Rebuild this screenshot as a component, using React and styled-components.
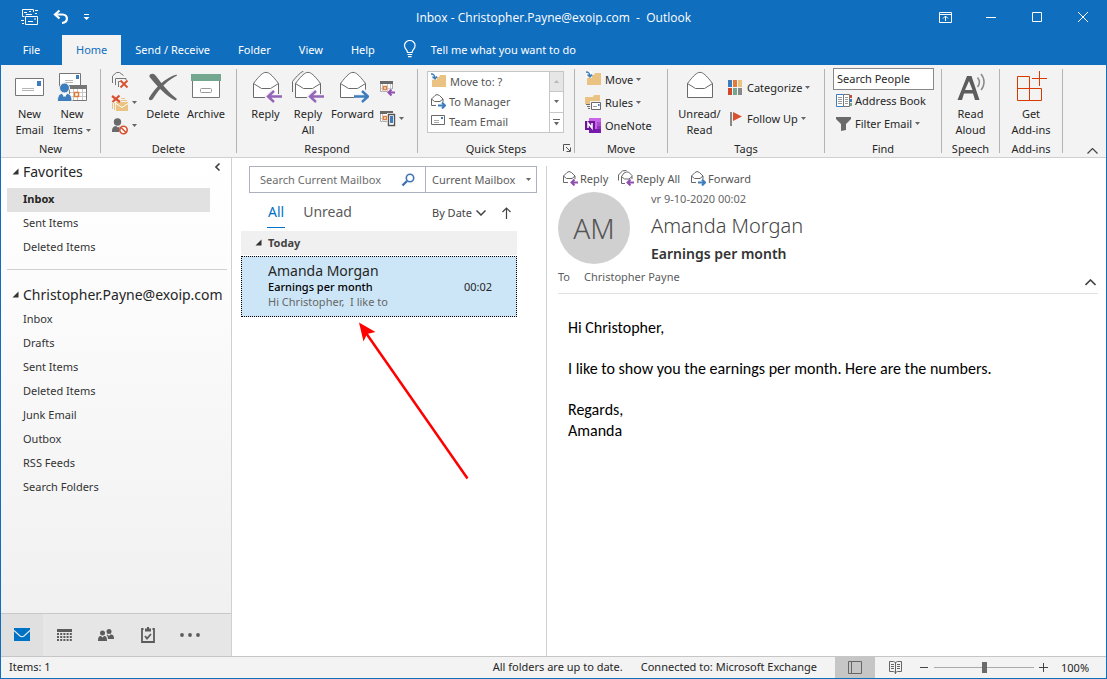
import React from "react";
import styled, { createGlobalStyle, css } from "styled-components";

const blue = "#106ebe";
const accent = "#0072c6";
const line = "#d0d0d0";
const ink = "#262626";
const grey = "#666";

const GlobalStyle = createGlobalStyle`
  * { box-sizing: border-box; }
  body {
    margin: 0;
    font-family: "Noto Sans", "Open Sans", sans-serif;
    font-size: 11px;
    color: ${ink};
  }
  button, input, select {
    font: inherit;
    color: inherit;
    margin: 0;
    padding: 0;
    border: 0;
    background: none;
    border-radius: 0;
  }
  svg { display: block; flex: none; }
  h2, p { margin: 0; }
`;

const Window = styled.div`
  display: flex;
  flex-direction: column;
  min-height: 100vh;
  border: 1px solid ${blue};
  background: #fff;
`;

/* ---------- title bar and tabs ---------- */

const TitleBar = styled.header`
  display: grid;
  grid-template-columns: 1fr auto 1fr;
  align-items: center;
  height: 34px;
  padding-bottom: 2px;
  background: ${blue};
  color: #fff;
`;

const QuickAccess = styled.div`
  display: flex;
  align-items: center;
  gap: 14px;
  padding-left: 20px;
`;

const Title = styled.div`
  font-size: 12px;
  font-family: "Open Sans", sans-serif;
  white-space: pre;
`;

const WindowControls = styled.div`
  display: flex;
  justify-content: flex-end;
`;

const WindowButton = styled.button`
  display: flex;
  align-items: center;
  justify-content: center;
  width: 46px;
  height: 30px;
`;

const TabBar = styled.nav`
  display: flex;
  height: 30px;
  background: ${blue};
`;

const Tab = styled.button`
  display: flex;
  align-items: center;
  gap: 14px;
  min-width: ${(p) => (p.$file ? "61px" : "0")};
  justify-content: center;
  padding: 0 14px 2px;
  color: ${(p) => (p.$active ? blue : "#fff")};
  background: ${(p) => (p.$active ? "#f3f3f3" : "transparent")};
`;

/* ---------- ribbon ---------- */

const RibbonBar = styled.section`
  display: flex;
  height: 93px;
  padding-top: 4px;
  background: #f3f3f3;
  border-bottom: 1px solid ${line};
`;

const Group = styled.div`
  display: flex;
  flex-direction: column;
  flex: none;
  width: ${(p) => p.$width}px;
`;

const GroupBody = styled.div`
  display: flex;
  flex: 1;
  padding-left: ${(p) => p.$pad || 0}px;
  justify-content: ${(p) => (p.$center ? "center" : "flex-start")};
`;

const GroupLabel = styled.div`
  display: grid;
  grid-template-columns: 1fr auto 1fr;
  align-items: center;
  height: 17px;
  padding-bottom: 1px;
  line-height: 15px;
  svg { grid-column: 3; justify-self: end; margin-right: 3px; }
  span { grid-column: 2; }
`;

const Divider = styled.div`
  flex: none;
  width: 1px;
  height: 84px;
  background: #b4b4b4;
`;

const BigButton = styled.button`
  display: flex;
  flex-direction: column;
  align-items: center;
  width: ${(p) => p.$width}px;
  height: 71px;
  padding-top: 2px;
  line-height: 16px;
  white-space: nowrap;
`;

const BigLabel = styled.span`
  display: flex;
  align-items: center;
  gap: 3px;
  &:first-of-type { margin-top: 3px; }
`;

const SmallColumn = styled.div`
  display: flex;
  flex-direction: column;
  width: ${(p) => (p.$width ? p.$width + "px" : "auto")};
  padding-left: ${(p) => p.$pad || 0}px;
  padding-top: ${(p) => p.$top || 0}px;
`;

const SmallButton = styled.button`
  display: flex;
  align-items: center;
  gap: 3px;
  height: ${(p) => p.$height || 23}px;
  padding-bottom: 2px;
  white-space: nowrap;
`;

const StepsBox = styled.div`
  display: flex;
  width: 137px;
  height: 62px;
  margin: 2px 0 0 9px;
  background: #fff;
  border: 1px solid #c6c6c6;
`;

const Steps = styled.div`
  flex: 1;
  padding-left: 2px;
  color: #555;
`;

const StepsScroll = styled.div`
  display: flex;
  flex-direction: column;
  width: 14px;
  border-left: 1px solid #c6c6c6;
`;

const StepsArrow = styled.button`
  display: flex;
  flex: 1;
  align-items: center;
  justify-content: center;
  color: ${(p) => (p.$off ? "#b8b8b8" : grey)};
  background: ${(p) => (p.$off ? "#e6e6e6" : "#fff")};
  & + & { border-top: 1px solid #c6c6c6; }
`;

const PeopleInput = styled.input`
  width: 101px;
  height: 22px;
  padding: 0 3px 2px;
  border: 1px solid #888;
  background: #fff;
  &::placeholder { color: ${ink}; opacity: 1; }
`;

const FindColumn = styled.div`
  display: flex;
  flex-direction: column;
  margin: -1px 0 0 8px;
  ${SmallButton} { margin-left: 3px; }
`;

const Collapse = styled.button`
  align-self: flex-end;
  margin: 0 8px 3px auto;
`;

/* ---------- folder pane ---------- */

const Main = styled.main`
  display: flex;
  flex: 1;
`;

const FolderPane = styled.aside`
  display: flex;
  flex-direction: column;
  flex: none;
  width: 231px;
  border-right: 1px solid ${line};
  background: linear-gradient(#fff, #fcfcfc 25%, #efefef);
`;

const FolderTree = styled.div`
  flex: 1;
  padding: 1px 4px 0 6px;
`;

const FolderHeading = styled.h2`
  display: flex;
  align-items: center;
  gap: 4px;
  height: 24px;
  margin-bottom: ${(p) => (p.$first ? 5 : 2)}px;
  padding-left: 5px;
  font-size: 14px;
  font-weight: 400;
`;

const PaneCollapse = styled.button`
  margin: -8px 6px 0 auto;
`;

const Folder = styled.a`
  display: block;
  height: 24px;
  margin-right: 17px;
  padding-left: 16px;
  line-height: 22px;
  color: #333;
  text-decoration: none;
  ${(p) =>
    p.$selected &&
    css`
      font-weight: 700;
      color: ${ink};
      background: #e1e1e1;
    `}
`;

const Rule = styled.hr`
  height: 1px;
  margin: 9px 0 12px;
  border: 0;
  background: ${line};
`;

const Switcher = styled.nav`
  display: flex;
  height: 43px;
  border-top: 1px solid #c8c8c8;
  background: #e6e6e6;
`;

const SwitchButton = styled.button`
  display: flex;
  align-items: center;
  justify-content: center;
  width: 42px;
  color: ${(p) => (p.$active ? accent : "#5c5c5c")};
  background: ${(p) => (p.$active ? "#e0e0e0" : "transparent")};
`;

/* ---------- message list ---------- */

const ListPane = styled.section`
  position: relative;
  flex: none;
  width: 315px;
  margin-top: 8px;
  border-right: 1px solid ${line};
`;

const SearchRow = styled.div`
  display: flex;
  height: 27px;
  margin: 0 9px 0 17px;
  border: 1px solid #abb2bb;
  color: #5c5c5c;
`;

const SearchField = styled.label`
  display: flex;
  flex: 1;
  min-width: 0;
  align-items: center;
  padding: 0 10px;
  input { flex: 1; min-width: 0; outline: 0; }
  input::placeholder { color: #6c6c6c; opacity: 1; }
`;

const ScopeField = styled.label`
  display: flex;
  flex: none;
  align-items: center;
  width: 111px;
  padding: 0 5px 0 6px;
  border-left: 1px solid #abb2bb;
  select { flex: 1; min-width: 0; appearance: none; outline: 0; }
`;

const FilterRow = styled.div`
  display: flex;
  height: 38px;
  padding: 4px 35px 0 35px;
`;

const Filter = styled.button`
  height: 31px;
  margin-right: 17px;
  padding: 0 1px 2px;
  font-size: 14px;
  color: ${(p) => (p.$active ? accent : "#5c5c5c")};
  border-bottom: 1px solid ${(p) => (p.$active ? accent : "transparent")};
`;

const Sort = styled.div`
  display: flex;
  align-items: center;
  gap: 16px;
  height: 31px;
  margin-left: auto;
  color: #444;
  button { display: flex; align-items: center; gap: 4px; }
`;

const DateHeader = styled.h2`
  display: flex;
  align-items: center;
  gap: 6px;
  height: 24px;
  margin: 0 29px 1px 9px;
  padding: 0 0 2px 14px;
  font-size: 11px;
  font-weight: 700;
  color: #444;
  background: #f0f0f0;
`;

const Message = styled.article`
  display: grid;
  grid-template-columns: 1fr auto;
  margin: 0 29px 0 9px;
  padding: 5px 24px 7px 26px;
  border: 1px dotted #000;
  background: #cde6f7;
  line-height: 15px;
`;

const Sender = styled.div`
  grid-column: 1 / 3;
  font-size: 14px;
  line-height: 17px;
`;

const Subject = styled.div`
  font-weight: 500;
  color: #000;
`;

const Preview = styled.div`
  color: ${grey};
  white-space: pre;
`;

const Pointer = styled.svg`
  position: absolute;
  left: 120px;
  top: 150px;
  pointer-events: none;
`;

/* ---------- reading pane ---------- */

const ReadingPane = styled.section`
  flex: 1;
  padding: 10px 8px 0 11px;
`;

const ReadingActions = styled.div`
  display: flex;
  gap: 10px;
  padding-left: 4px;
  color: #555;
  button { display: flex; align-items: center; gap: 2px; height: 20px; }
`;

const MailHead = styled.div`
  display: flex;
  gap: 21px;
`;

const Avatar = styled.div`
  display: flex;
  align-items: center;
  justify-content: center;
  width: 72px;
  height: 72px;
  margin-top: 4px;
  border-radius: 50%;
  background: #d0d0d0;
  color: #555;
  font-size: 28px;
  font-weight: 300;
`;

const MailDate = styled.div`
  margin-top: 2px;
  color: ${grey};
  line-height: 17px;
`;

const MailSender = styled.div`
  font-size: 20px;
  font-weight: 300;
  line-height: 37px;
  color: #444;
`;

const MailSubject = styled.h2`
  font-size: 14px;
  font-weight: 600;
  line-height: 20px;
  color: #333;
`;

const Recipients = styled.div`
  display: flex;
  gap: 14px;
  height: 30px;
  padding-top: 5px;
  border-bottom: 1px solid #e1e1e1;
  line-height: 16px;
  color: #5c5c5c;
  button { margin: 10px 2px 0 auto; align-self: flex-start; }
`;

const MailBody = styled.div`
  padding: 23px 10px;
  font-family: Carlito, Calibri, Lato, sans-serif;
  font-size: 16px;
  line-height: 21px;
  color: #000;
  p { margin-bottom: 20px; }
`;

/* ---------- status bar ---------- */

const StatusBar = styled.footer`
  display: flex;
  align-items: stretch;
  height: 22px;
  padding: 0 16px 0 8px;
  line-height: 20px;
  background: #f3f3f3;
  border-top: 1px solid #c6c6c6;
`;

const StatusRight = styled.div`
  display: flex;
  margin-left: auto;
  span { margin-right: 18px; }
`;

const ViewButton = styled.button`
  display: flex;
  align-items: center;
  justify-content: center;
  width: 40px;
  background: ${(p) => (p.$active ? "#c6c6c6" : "transparent")};
`;

const Zoom = styled.div`
  display: flex;
  align-items: center;
  gap: 5px;
  margin-left: 5px;
  output { width: 29px; margin-left: 8px; }
`;

const ZoomSlider = styled.input`
  appearance: none;
  width: 100px;
  height: 12px;
  &::-webkit-slider-runnable-track {
    height: 11px;
    background: linear-gradient(#ababab, #ababab) center / 100% 1px no-repeat;
  }
  &::-webkit-slider-thumb {
    appearance: none;
    width: 5px;
    height: 11px;
    background: #6a6a6a;
  }
`;

/* ---------- icons ---------- */

const Caret = ({ color = "#666" }) => (
  <svg width="5" height="3" viewBox="0 0 5 3" fill={color}>
    <path d="M0 0h5L2.500 3z" />
  </svg>
);

const Corner = () => (
  <svg width="7" height="7" viewBox="0 0 7 7" fill="#333">
    <path d="M6.500 0.500v6h-6z" />
  </svg>
);

const Chevron = ({ d, w = 10, h = 6, width = 1.2 }) => (
  <svg width={w} height={h} viewBox={`0 0 ${w} ${h}`} fill="none" stroke="#444" strokeWidth={width}>
    <path d={d} />
  </svg>
);

const SendReceiveIcon = () => (
  <svg width="18" height="18" viewBox="0 0 18 18" fill="none" stroke="#fff">
    <path d="M12.500 4V1.500H1.500v7h2M3 4.500h3M8 3.500h2M14 2.500h3M14 5.500h2M0 12.500h3M1 15.500h2" />
    <path d="M4.500 8.500h12v8h-12zM7 13.500h5M13 11h2M5 7V6.500h6" />
  </svg>
);

const UndoIcon = () => (
  <svg width="16" height="16" viewBox="0 0 16 16" fill="none" stroke="#fff" strokeWidth="2.200">
    <path d="M6.500 1.500L2 5.500l4.500 4" />
    <path d="M2.500 5.500H9.500c6 0 6 8-0.500 8.500" />
  </svg>
);

const CustomizeIcon = () => (
  <svg width="7" height="7" viewBox="0 0 7 7" fill="#fff">
    <path d="M1 0h5v1H1zM0.500 3h6L3.500 6z" />
  </svg>
);

const BulbIcon = () => (
  <svg width="14" height="18" viewBox="0 0 14 18" fill="none" stroke="#fff" strokeWidth="1.200">
    <path d="M4.500 12.500c0-3-3-3.500-3-7a5.300 5 0 0 1 10.600 0c0 3.500-3 4-3 7zM4.500 14.500h4.600M5 16.700h3.600" />
  </svg>
);

const NewEmailIcon = () => (
  <svg width="32" height="32" viewBox="0 0 32 32">
    <path d="M1.500 7.500h28v17h-28z" fill="#fff" stroke="#767676" />
    <path d="M8 17.500h12M8 19.500h12" stroke="#b4b4b4" />
    <path d="M23 10h4v5h-4z" fill="#3e7dbd" />
  </svg>
);

const NewItemsIcon = () => (
  <svg width="32" height="32" viewBox="0 0 32 32">
    <path d="M3.500 2.500h21v15h-21z" fill="#fff" stroke="#767676" />
    <path d="M9 9.500h8M9 11.500h8" stroke="#b4b4b4" />
    <path d="M20 4h3v4h-3z" fill="#3e7dbd" />
    <path d="M13.500 14.500h17v15h-17z" fill="#fff" stroke="#767676" />
    <path d="M13 14h18v4H13z" fill="#767676" />
    <path d="M17.500 18v11M21.500 18v11M26.500 18v11M14 21.500h16M14 25.500h16" stroke="#c8c8c8" />
    <path d="M18.500 21.500h4v4h-4z" fill="#fff" stroke="#e07b39" strokeWidth="1.500" />
    <circle cx="8.500" cy="17" r="5" fill="#3e7dbd" stroke="#f3f3f3" />
    <path d="M1.500 30.500c0-5 1-7 4-8l3 2 3-2c3.500 1 4.500 3 4.500 8z" fill="#3e7dbd" stroke="#f3f3f3" />
    <path d="M7.500 22.500h2l0.500 3h-3z" fill="#fff" />
  </svg>
);

const DeleteIcon = () => (
  <svg width="32" height="32" viewBox="0 0 32 32" fill="#666">
    <path d="M3 3.500C5.500 2 7 2.500 9 5c7 9 12 16 21 23l-1.500 1.500C20 26 9 14 3 6.500c-.800-1-.800-2 0-3z" />
    <path d="M30 4.500c-8 4-17 12-23.500 22.500-1.500 3-5 3-4.500 0C8 17 18 7 29.500 3.500z" />
  </svg>
);

const ArchiveIcon = () => (
  <svg width="32" height="32" viewBox="0 0 32 32">
    <path d="M2.500 9.500h27v17h-27z" fill="#fff" stroke="#767676" />
    <path d="M1 3h30v7H1z" fill="#73a790" />
    <rect x="10.500" y="17.500" width="11" height="4" rx="1" fill="#fff" stroke="#999" />
  </svg>
);

const OpenEnvelope = () => (
  <>
    <path d="M3.500 26.500V12.500c3-4 7-9 10-10.500 1-.800 4-.800 5 0 3 1.500 7 6.500 10 10.500v14z" fill="#fff" stroke="#6a6a6a" />
    <path d="M3.500 12.500l8 5h9l8-5" fill="none" stroke="#6a6a6a" />
  </>
);

const EnvelopeIcon = ({ kind, all }) => (
  <svg width="32" height="32" viewBox="0 0 32 32">
    {all && (
      <path d="M0.500 21V10.500c3-4 7-8.500 11-10.500" fill="none" stroke="#6a6a6a" />
    )}
    <OpenEnvelope />
    {kind === "reply" && (
      <>
        <path d="M18 25.500h14M23.500 19.500l-6 6 6 6" fill="none" stroke="#f3f3f3" strokeWidth="5" />
        <path d="M18 25.500h14M24 20l-6 5.500 6 5.500" fill="none" stroke="#9466b8" strokeWidth="2.400" />
      </>
    )}
    {kind === "forward" && (
      <>
        <path d="M17 25.500h14M26 19.500l5 6-5 6" fill="none" stroke="#f3f3f3" strokeWidth="5" />
        <path d="M17 25.500h14M25 20l6 5.500-6 5.500" fill="none" stroke="#3e7dbd" strokeWidth="2.400" />
      </>
    )}
  </svg>
);

const SmallEnvelope = ({ kind, all }) => (
  <svg width="16" height="16" viewBox="0 0 16 16" fill="none" stroke="#666">
    {all && <path d="M0.500 10.500V5l4-4.200 4-.3" />}
    <path d={all ? "M7 13.500H3.500V6.500L6 3l2.500-1h2L14 5.500V9" : "M6 12.500H1.500V6L5 2.500 7 1.500 9.500 2.500 13 6v3"} />
    <path d={all ? "M3.500 6.500l3 2.500h4.500l3-2.500" : "M1.500 6l3 2.500h5.500l3-2.500"} />
    {kind === "reply" ? (
      <path d="M9.500 12.500H16M12.500 9.500l-3 3 3 3" stroke="#9050b0" strokeWidth="2" />
    ) : (
      <path d="M8 12.500h6.500M12 9.500l3 3-3 3" stroke="#3e7dbd" strokeWidth="2" />
    )}
  </svg>
);

const IgnoreIcon = () => (
  <svg width="18" height="18" viewBox="0 0 18 18" fill="none" stroke="#777">
    <path d="M1.500 12V5l4-3.500h3l4 3M4.500 14V7.500H15V9M7.500 16V10.500H10" />
    <path d="M9.500 9.500l7 7M16.500 9.500l-7 7" stroke="#d9512f" strokeWidth="1.800" />
  </svg>
);

const CleanUpIcon = () => (
  <svg width="18" height="18" viewBox="0 0 18 18">
    <path d="M10 4.500h4M10 6.500h6M1.500 9v6M3.500 9v7" stroke="#eac282" />
    <path d="M5 8h12v9H5z" fill="#eac282" />
    <path d="M5 9.500l6 4 6-4" fill="none" stroke="#fff" />
    <path d="M1 2l8 6M8.500 1.500L1.500 8" stroke="#d9512f" strokeWidth="2.200" />
  </svg>
);

const JunkIcon = () => (
  <svg width="18" height="18" viewBox="0 0 18 18">
    <circle cx="6.500" cy="5" r="3.700" fill="#6a6a6a" />
    <path d="M1 15c0-4 1-5.500 4-6l2 1.500 1.500-1L8 15z" fill="#6a6a6a" />
    <circle cx="12.500" cy="13" r="3.700" fill="#fff" stroke="#d9512f" strokeWidth="1.600" />
    <path d="M10 10.500l5 5" stroke="#d9512f" strokeWidth="1.600" />
  </svg>
);

const MeetingIcon = ({ phone }) => (
  <svg width="17" height="17" viewBox="0 0 17 17">
    <path d="M1.500 2.500h12v9h-12z" fill="#fff" stroke="#aaa" />
    <path d="M1 1h13v3H1z" fill="#6a6a6a" />
    <path d="M3.500 4v8M8.500 4v8M11.500 4v8M2 8.500h11" stroke="#ccc" />
    <path d="M4.500 6.500h3v3h-3z" fill="#fff" stroke="#e07b39" strokeWidth="1.400" />
    {phone ? (
      <>
        <path d="M8 3h9v14H8z" fill="#f3f3f3" />
        <path d="M9.500 4.500h6v11h-6z" fill="#fff" stroke="#555" strokeWidth="1.400" />
        <path d="M11 6h3v7h-3z" fill="#3e7dbd" />
      </>
    ) : (
      <>
        <path d="M9 9h8v8H9z" fill="#f3f3f3" />
        <path d="M9.500 12.500h6.500M12.500 9.500l-3 3 3 3" fill="none" stroke="#9050b0" strokeWidth="2" />
      </>
    )}
  </svg>
);

const MoveFolderIcon = () => (
  <svg width="17" height="17" viewBox="0 0 17 17">
    <path d="M2 4h7l1-2h6v12H2z" fill="#eac282" />
    <path d="M1 0h6v7H1z" fill="#fff" fillOpacity="0.7" />
    <path d="M1 1c3 0 4 1 4 5M2.500 3.500L5 6l2-2.500" fill="none" stroke="#3e7dbd" strokeWidth="1.500" />
  </svg>
);

const RulesIcon = () => (
  <svg width="17" height="17" viewBox="0 0 17 17">
    <path d="M0 3h8l1-2h6v9H0z" fill="#eac282" />
    <path d="M5 7h11v9H5z" fill="#f3f3f3" />
    <path d="M6.500 8.500h9v7h-9z" fill="#fff" stroke="#6a6a6a" />
    <path d="M1 10.500h4M2 12.500h3M3 14.500h2" stroke="#6a6a6a" />
    <path d="M8 12.500h4" stroke="#999" />
    <path d="M13 10h1.500v2H13z" fill="#3e7dbd" />
  </svg>
);

const OneNoteIcon = () => (
  <svg width="17" height="17" viewBox="0 0 17 17">
    <path d="M4 1h12v15H4z" fill="#ca64ea" />
    <path d="M12 5h4v4h-4z" fill="#ae4bd5" />
    <path d="M12 9h4v4h-4z" fill="#9332bf" />
    <path d="M4 12h12v4H4z" fill="#7719aa" />
    <path d="M0 4h10v9H0z" fill="#6b1699" />
    <path d="M3 11V6l4 5V6" fill="none" stroke="#fff" strokeWidth="1.500" />
  </svg>
);

const TeamEmailIcon = () => (
  <svg width="16" height="14" viewBox="0 0 16 14">
    <path d="M1.500 1.500h13v9h-13z" fill="#fff" stroke="#6a6a6a" />
    <path d="M4 6.500h5M4 8.500h5" stroke="#aaa" />
    <path d="M11 3h2v2h-2z" fill="#3e7dbd" />
  </svg>
);

const CategorizeIcon = () => (
  <svg width="16" height="16" viewBox="0 0 16 16">
    <path d="M0 0h4v7H0z" fill="#3e7dbd" />
    <path d="M5 0h4v7H5z" fill="#e07b39" />
    <path d="M10 0h4v7h-4z" fill="#eac282" />
    <path d="M0 8h4v7H0z" fill="#cf4b2c" />
    <path d="M5 8h4v7H5z" fill="#73a790" />
    <path d="M10 8h4v7h-4z" fill="#888" />
  </svg>
);

const FlagIcon = () => (
  <svg width="16" height="16" viewBox="0 0 16 16">
    <path d="M2 1h2v14H2z" fill="#888" />
    <path d="M5 1l9 4.500L5 10z" fill="#d9512f" />
  </svg>
);

const AddressBookIcon = () => (
  <svg width="16" height="16" viewBox="0 0 16 16">
    <path d="M0.500 1.500h7v12h-7z" fill="#fff" stroke="#3e7dbd" />
    <path d="M7.500 1.500h6v12h-6z" fill="#fff" stroke="#777" />
    <path d="M2 4.500h4M2 6.500h4M2 8.500h4M2 10.500h4M9 4.500h3M9 6.500h3M9 8.500h3M9 10.500h3" stroke="#999" />
    <path d="M14 2h2v3h-2z" fill="#cf4b2c" />
    <path d="M14 6h2v3h-2z" fill="#3e7dbd" />
    <path d="M14 10h2v3h-2z" fill="#73a790" />
  </svg>
);

const FilterIcon = () => (
  <svg width="16" height="16" viewBox="0 0 16 16" fill="#6a6a6a">
    <path d="M0 1h15v2L10 8v6l-5 1V8L0 3z" />
  </svg>
);

const ReadAloudIcon = () => (
  <svg width="32" height="32" viewBox="0 0 32 32">
    <path
      d="M12 5h4.500l8 24h-4.500l-2-6.500H9L7 29H2.500zM14 10l-4 9h7.500z"
      fill="#5c5c5c"
      fillRule="evenodd"
    />
    <path d="M22.500 6.500c2.500 3 2.500 6.500 0 9.500M26 3c4 4.500 4 11.500 0 16" fill="none" stroke="#8a8a8a" strokeWidth="1.500" />
  </svg>
);

const AddInsIcon = () => (
  <svg width="32" height="32" viewBox="0 0 32 32" fill="none" stroke="#d83b01">
    <path d="M2.500 5.500h12v12h-12zM2.500 17.500h12v12h-12zM14.500 17.500h12v12h-12zM24.500 0v15M17 7.500h15" />
  </svg>
);

const SearchIcon = () => (
  <svg width="14" height="14" viewBox="0 0 14 14" fill="none" stroke="#3e74b5">
    <circle cx="9" cy="5" r="3.700" strokeWidth="1.600" />
    <path d="M6 8L1.500 12.500" strokeWidth="2.400" />
  </svg>
);

const navIcons = {
  Mail: (
    <svg width="16" height="14" viewBox="0 0 16 14" fill={accent}>
      <path d="M0 0h16v13H0z" />
      <path d="M0 2.500L6 8c1.500 1 2.500 1 4 0l6-5.500" fill="none" stroke="#e8e8e8" strokeWidth="1.200" />
    </svg>
  ),
  Calendar: (
    <svg width="15" height="13" viewBox="0 0 15 13" stroke="currentColor">
      <path d="M0 1.500h15" strokeWidth="3" />
      <path d="M0 5h15M0 8h15M0 11h15" strokeWidth="2" strokeDasharray="2 1.200" />
    </svg>
  ),
  People: (
    <svg width="16" height="14" viewBox="0 0 16 14" fill="currentColor">
      <circle cx="4.500" cy="5" r="2.500" />
      <path d="M0 13c0-4 1-5 3-5l1.500 1.500L6 8c2 0 3 1 3 5z" />
      <circle cx="11" cy="3.500" r="2.500" />
      <path d="M8.500 7l1-.5L11 8l1.500-1.500c3 0 3.500 1.500 3.500 4.500h-6c0-2-.5-3-1.500-4z" />
    </svg>
  ),
  Tasks: (
    <svg width="14" height="16" viewBox="0 0 14 16" fill="none" stroke="currentColor" strokeWidth="1.800">
      <path d="M2.500 2H1v13h12V2h-1.500" />
      <path d="M4 1.500h6v3H4z" fill="currentColor" stroke="none" />
      <path d="M6 0h2v2H6z" fill="currentColor" stroke="none" />
      <path d="M4 9l2 2.500L10 7" />
    </svg>
  ),
  More: (
    <svg width="20" height="4" viewBox="0 0 20 4" fill="currentColor">
      <circle cx="2" cy="2" r="1.900" />
      <circle cx="10" cy="2" r="1.900" />
      <circle cx="18" cy="2" r="1.900" />
    </svg>
  ),
};

/* ---------- data ---------- */

const tabs = ["File", "Home", "Send / Receive", "Folder", "View", "Help"];
const favorites = ["Inbox", "Sent Items", "Deleted Items"];
const folders = [
  "Inbox",
  "Drafts",
  "Sent Items",
  "Deleted Items",
  "Junk Email",
  "Outbox",
  "RSS Feeds",
  "Search Folders",
];

const Big = ({ icon, lines, width, menu }) => (
  <BigButton $width={width}>
    {icon}
    {lines.map((text, i) => (
      <BigLabel key={text}>
        {text}
        {menu && i === lines.length - 1 && <Caret />}
      </BigLabel>
    ))}
  </BigButton>
);

const Header = () => (
  <>
    <TitleBar>
      <QuickAccess>
        <button aria-label="Send and receive"><SendReceiveIcon /></button>
        <button aria-label="Undo"><UndoIcon /></button>
        <button aria-label="Customize"><CustomizeIcon /></button>
      </QuickAccess>
      <Title>{"Inbox - Christopher.Payne@exoip.com  -  Outlook"}</Title>
      <WindowControls>
        <WindowButton aria-label="Ribbon display options">
          <svg width="13" height="11" viewBox="0 0 13 11" fill="none" stroke="#fff">
            <path d="M0.500 0.500h12v10H0.500zM0 2.500h13M6.500 9V4.500M4 6.500L6.500 4 9 6.500" />
          </svg>
        </WindowButton>
        <WindowButton aria-label="Minimize">
          <svg width="10" height="10" viewBox="0 0 10 10" stroke="#fff"><path d="M0 5.500h10" /></svg>
        </WindowButton>
        <WindowButton aria-label="Maximize">
          <svg width="10" height="10" viewBox="0 0 10 10" fill="none" stroke="#fff"><path d="M0.500 0.500h9v9h-9z" /></svg>
        </WindowButton>
        <WindowButton aria-label="Close">
          <svg width="10" height="10" viewBox="0 0 10 10" stroke="#fff"><path d="M0 0l10 10M10 0L0 10" /></svg>
        </WindowButton>
      </WindowControls>
    </TitleBar>
    <TabBar>
      {tabs.map((name) => (
        <Tab key={name} $file={name === "File"} $active={name === "Home"}>{name}</Tab>
      ))}
      <Tab><BulbIcon />Tell me what you want to do</Tab>
    </TabBar>
  </>
);

const Ribbon = () => (
  <RibbonBar>
    <Group $width={99}>
      <GroupBody $pad={7}>
        <Big icon={<NewEmailIcon />} lines={["New", "Email"]} width={43} />
        <Big icon={<NewItemsIcon />} lines={["New", "Items"]} width={42} menu />
      </GroupBody>
      <GroupLabel><span>New</span></GroupLabel>
    </Group>
    <Divider />
    <Group $width={135}>
      <GroupBody $pad={10}>
        <SmallColumn $width={31}>
          <SmallButton aria-label="Ignore"><IgnoreIcon /></SmallButton>
          <SmallButton aria-label="Clean up"><CleanUpIcon /><Caret /></SmallButton>
          <SmallButton aria-label="Junk"><JunkIcon /><Caret /></SmallButton>
        </SmallColumn>
        <Big icon={<DeleteIcon />} lines={["Delete"]} width={42} />
        <Big icon={<ArchiveIcon />} lines={["Archive"]} width={44} />
      </GroupBody>
      <GroupLabel><span>Delete</span></GroupLabel>
    </Group>
    <Divider />
    <Group $width={180}>
      <GroupBody $pad={7}>
        <Big icon={<EnvelopeIcon kind="reply" />} lines={["Reply"]} width={43} />
        <Big icon={<EnvelopeIcon kind="reply" all />} lines={["Reply", "All"]} width={42} />
        <Big icon={<EnvelopeIcon kind="forward" />} lines={["Forward"]} width={47} />
        <SmallColumn $pad={3} $top={5}>
          <SmallButton aria-label="Meeting" $height={30}><MeetingIcon /></SmallButton>
          <SmallButton aria-label="More respond actions" $height={30}><MeetingIcon phone /><Caret /></SmallButton>
        </SmallColumn>
      </GroupBody>
      <GroupLabel><span>Respond</span></GroupLabel>
    </Group>
    <Divider />
    <Group $width={156}>
      <GroupBody>
        <StepsBox>
          <Steps>
            <SmallButton $height={20}><MoveFolderIcon />Move to: ?</SmallButton>
            <SmallButton $height={20}><SmallEnvelope kind="forward" />To Manager</SmallButton>
            <SmallButton $height={20}><TeamEmailIcon />Team Email</SmallButton>
          </Steps>
          <StepsScroll>
            <StepsArrow $off aria-label="Previous">
              <svg width="5" height="3" viewBox="0 0 5 3" fill="currentColor"><path d="M0 3h5L2.500 0z" /></svg>
            </StepsArrow>
            <StepsArrow aria-label="Next"><Caret /></StepsArrow>
            <StepsArrow aria-label="More">
              <svg width="7" height="7" viewBox="0 0 7 7" fill="currentColor"><path d="M0 0h7v1H0zM1 3h5L3.500 6.500z" /></svg>
            </StepsArrow>
          </StepsScroll>
        </StepsBox>
      </GroupBody>
      <GroupLabel>
        <span>Quick Steps</span>
        <svg width="8" height="8" viewBox="0 0 8 8" fill="none" stroke="#555">
          <path d="M0.500 7V0.500H7M3 3l4 4M7.500 3.500v4h-4" />
        </svg>
      </GroupLabel>
    </Group>
    <Divider />
    <Group $width={92}>
      <GroupBody $pad={10}>
        <SmallColumn>
          <SmallButton><MoveFolderIcon />Move<Caret /></SmallButton>
          <SmallButton><RulesIcon />Rules<Caret /></SmallButton>
          <SmallButton><OneNoteIcon />OneNote</SmallButton>
        </SmallColumn>
      </GroupBody>
      <GroupLabel><span>Move</span></GroupLabel>
    </Group>
    <Divider />
    <Group $width={156}>
      <GroupBody $pad={7}>
        <Big icon={<EnvelopeIcon />} lines={["Unread/", "Read"]} width={49} />
        <SmallColumn $pad={4} $top={4}>
          <SmallButton $height={31}><CategorizeIcon />Categorize<Caret /></SmallButton>
          <SmallButton $height={31}><FlagIcon />Follow Up<Caret /></SmallButton>
        </SmallColumn>
      </GroupBody>
      <GroupLabel><span>Tags</span></GroupLabel>
    </Group>
    <Divider />
    <Group $width={116}>
      <GroupBody>
        <FindColumn>
          <PeopleInput aria-label="Search People" placeholder="Search People" />
          <SmallButton><AddressBookIcon />Address Book</SmallButton>
          <SmallButton><FilterIcon />Filter Email<Caret /></SmallButton>
        </FindColumn>
      </GroupBody>
      <GroupLabel><span>Find</span></GroupLabel>
    </Group>
    <Divider />
    <Group $width={57}>
      <GroupBody $center>
        <Big icon={<ReadAloudIcon />} lines={["Read", "Aloud"]} width={48} />
      </GroupBody>
      <GroupLabel><span>Speech</span></GroupLabel>
    </Group>
    <Divider />
    <Group $width={62}>
      <GroupBody $center>
        <Big icon={<AddInsIcon />} lines={["Get", "Add-ins"]} width={48} />
      </GroupBody>
      <GroupLabel><span>Add-ins</span></GroupLabel>
    </Group>
    <Divider />
    <Collapse aria-label="Collapse the ribbon">
      <Chevron d="M0.500 5.500L5.500 0.500l5 5" w={11} />
    </Collapse>
  </RibbonBar>
);

const Folders = () => (
  <FolderPane>
    <FolderTree>
      <FolderHeading $first>
        <Corner />Favorites
        <PaneCollapse aria-label="Minimize the folder pane">
          <Chevron d="M4.500 0.500L1 4l3.500 3.500" w={6} h={8} width={1.6} />
        </PaneCollapse>
      </FolderHeading>
      {favorites.map((name) => (
        <Folder key={name} href="#" $selected={name === "Inbox"}>{name}</Folder>
      ))}
      <Rule />
      <FolderHeading><Corner />Christopher.Payne@exoip.com</FolderHeading>
      {folders.map((name) => (
        <Folder key={name} href="#">{name}</Folder>
      ))}
    </FolderTree>
    <Switcher>
      {Object.keys(navIcons).map((name) => (
        <SwitchButton key={name} aria-label={name} $active={name === "Mail"}>{navIcons[name]}</SwitchButton>
      ))}
    </Switcher>
  </FolderPane>
);

const MessageList = () => (
  <ListPane>
    <SearchRow>
      <SearchField>
        <input aria-label="Search Current Mailbox" placeholder="Search Current Mailbox" />
        <SearchIcon />
      </SearchField>
      <ScopeField>
        <select aria-label="Search scope">
          <option>Current Mailbox</option>
        </select>
        <Caret />
      </ScopeField>
    </SearchRow>
    <FilterRow>
      <Filter $active>All</Filter>
      <Filter>Unread</Filter>
      <Sort>
        <button>By Date <Chevron d="M0.500 0.500l4.500 4.500 4.500-4.500" width={1.5} /></button>
        <button aria-label="Sort order">
          <svg width="9" height="12" viewBox="0 0 9 12" fill="none" stroke="#444" strokeWidth="1.200">
            <path d="M4.500 12V1M0.500 5l4-4 4 4" />
          </svg>
        </button>
      </Sort>
    </FilterRow>
    <DateHeader><Corner />Today</DateHeader>
    <Message>
      <Sender>Amanda Morgan</Sender>
      <Subject>Earnings per month</Subject>
      <div>00:02</div>
      <Preview>{"Hi Christopher,  I like to"}</Preview>
    </Message>
    <Pointer width="120" height="170" viewBox="0 0 120 170">
      <path d="M115.500 162.500L14 17" stroke="#f00" strokeWidth="2.500" fill="none" />
      <path d="M7 6.500l4.500 19 3.500-7.500 8.500-2z" fill="#f00" />
    </Pointer>
  </ListPane>
);

const Reading = () => (
  <ReadingPane>
    <ReadingActions>
      <button><SmallEnvelope kind="reply" />Reply</button>
      <button><SmallEnvelope kind="reply" all />Reply All</button>
      <button><SmallEnvelope kind="forward" />Forward</button>
    </ReadingActions>
    <MailHead>
      <Avatar>AM</Avatar>
      <div>
        <MailDate>vr 9-10-2020 00:02</MailDate>
        <MailSender>Amanda Morgan</MailSender>
        <MailSubject>Earnings per month</MailSubject>
      </div>
    </MailHead>
    <Recipients>
      <span>To</span>
      <span>Christopher Payne</span>
      <button aria-label="Collapse header">
        <Chevron d="M0.500 6l5-5 5 5" w={11} h={7} width={1.6} />
      </button>
    </Recipients>
    <MailBody>
      <p>Hi Christopher,</p>
      <p>I like to show you the earnings per month. Here are the numbers.</p>
      <p>Regards,<br />Amanda</p>
    </MailBody>
  </ReadingPane>
);

const Status = () => (
  <StatusBar>
    <div>Items: 1</div>
    <StatusRight>
      <span>All folders are up to date.</span>
      <span>Connected to: Microsoft Exchange</span>
      <ViewButton $active aria-label="Normal view">
        <svg width="14" height="13" viewBox="0 0 14 13" fill="none" stroke="#666"><path d="M0.500 0.500h13v12H0.500zM3.500 0v13" /></svg>
      </ViewButton>
      <ViewButton aria-label="Reading view">
        <svg width="13" height="13" viewBox="0 0 13 13" fill="none" stroke="#666">
          <path d="M0.500 0.500h4l2 1 2-1h4v10h-4l-2 1-2-1h-4zM6.500 1v12M2 3.500h3M2 5.500h3M2 7.500h3M8 3.500h3M8 5.500h3M8 7.500h3" />
        </svg>
      </ViewButton>
      <Zoom>
        <button aria-label="Zoom out">
          <svg width="9" height="9" viewBox="0 0 9 9" stroke="#444"><path d="M0 4.500h8" /></svg>
        </button>
        <ZoomSlider type="range" aria-label="Zoom" min="0" max="100" defaultValue="50" />
        <button aria-label="Zoom in">
          <svg width="9" height="9" viewBox="0 0 9 9" stroke="#444"><path d="M0 4.500h9M4.500 0v9" /></svg>
        </button>
        <output>100%</output>
      </Zoom>
    </StatusRight>
  </StatusBar>
);

export default function App() {
  return (
    <>
      <GlobalStyle />
      <Window>
        <Header />
        <Ribbon />
        <Main>
          <Folders />
          <MessageList />
          <Reading />
        </Main>
        <Status />
      </Window>
    </>
  );
}
